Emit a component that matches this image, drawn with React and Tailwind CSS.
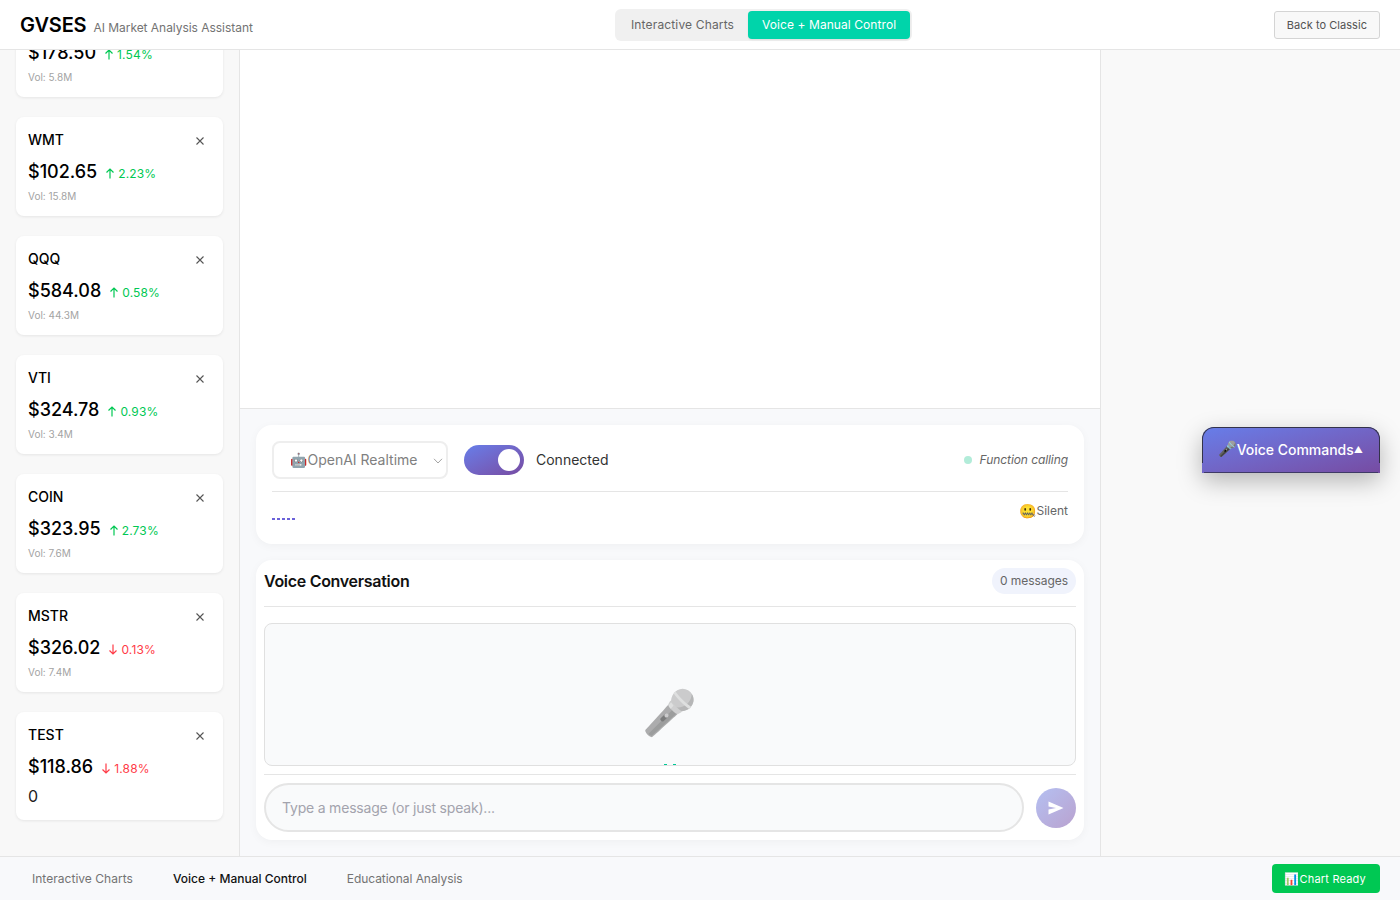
import React from "react";

const F = "font-['Inter','Liberation_Sans',sans-serif]";

const stocks = [
  ["", "$178.50", "1.54%", true, "Vol: 5.8M"],
  ["WMT", "$102.65", "2.23%", true, "Vol: 15.8M"],
  ["QQQ", "$584.08", "0.58%", true, "Vol: 44.3M"],
  ["VTI", "$324.78", "0.93%", true, "Vol: 3.4M"],
  ["COIN", "$323.95", "2.73%", true, "Vol: 7.6M"],
  ["MSTR", "$326.02", "0.13%", false, "Vol: 7.4M"],
  ["TEST", "$118.86", "1.88%", false, null],
];

function Arrow({ up }) {
  return (
    <svg width="10" height="11" viewBox="0 0 10 11" fill="none" stroke="currentColor" strokeWidth="1.2" className="shrink-0">
      {up ? <path d="M5 10.5V1M1.5 4.5 5 1l3.5 3.5" /> : <path d="M5 .5V10M1.5 6.5 5 10l3.5-3.5" />}
    </svg>
  );
}

function Card({ s }) {
  const [sym, price, pct, up, vol] = s;
  return (
    <div className={`bg-white rounded-lg px-3 pt-3 shadow-[0_1px_3px_rgba(0,0,0,0.08)] ${vol ? "h-[99px]" : "h-[108px]"}`}>
      <div className="flex items-center justify-between h-[22px]">
        <span className="text-sm leading-[22px] font-medium text-black">{sym}</span>
        <svg width="8" height="8" viewBox="0 0 8 8" stroke="#555" strokeWidth="1.1" className="mr-[7px] mt-[2px]"><path d="M.5.5l7 7M7.5.5l-7 7" /></svg>
      </div>
      <div className="flex items-center gap-2 mt-[9px] h-6">
        <span className="text-lg leading-6 font-medium text-black">{price}</span>
        <span className={`flex items-center gap-[3px] text-xs tracking-[0.15px] mt-[3px] ${up ? "text-[#00c853]" : "text-[#ff3b47]"}`}>
          <Arrow up={up} />{pct}
        </span>
      </div>
      {vol ? (
        <div className="text-[10px] leading-3 text-[#a3a3a3] mt-[6px]">{vol}</div>
      ) : (
        <div className="text-base leading-5 text-[#222] mt-[7px]">0</div>
      )}
    </div>
  );
}

function Emoji({ c, className }) {
  return <span className={`font-['Noto_Color_Emoji','Apple_Color_Emoji','Segoe_UI_Emoji',sans-serif] ${className || ""}`}>{c}</span>;
}

export default function App() {
  return (
    <div className={`${F} h-[900px] w-[1400px] overflow-hidden flex flex-col bg-[#f8f9fb]`}>
      <header className="relative z-10 h-[50px] shrink-0 bg-white border-b border-[#e5e5e5] flex items-center pl-5 pr-5">
        <div className="flex items-baseline gap-[7px] w-[595px]">
          <span className="text-xl leading-7 font-semibold text-black tracking-[-0.15px]">GVSES</span>
          <span className="text-xs text-[#737373] tracking-[-0.04px]">AI Market Analysis Assistant</span>
        </div>
        <div className="flex items-center bg-[#f0f0f0] rounded-md p-[2px] h-8">
          <div className="px-[14px] h-7 flex items-center text-xs text-[#666] tracking-[0.15px]">Interactive Charts</div>
          <div className="px-[14px] h-7 flex items-center rounded bg-[#00d4aa] text-xs text-white tracking-[0.07px] shadow-[0_1px_2px_rgba(0,0,0,0.08)]">Voice + Manual Control</div>
        </div>
        <div className="ml-auto">
          <button className="h-7 px-3 rounded-[3px] border border-[#d4d4d4] bg-[#f8f8f8] text-[11px] text-[#525252] tracking-[0.05px] pt-[1px]">Back to Classic</button>
        </div>
      </header>

      <main className="flex-1 min-h-0 flex">
        <aside className="w-[240px] shrink-0 bg-[#f8f8f8] border-r border-[#e5e5e5] overflow-hidden px-4">
          <div className="flex flex-col gap-5 -mt-[52px]">
            {stocks.map((s) => <Card key={s[1]} s={s} />)}
          </div>
        </aside>

        <section className="w-[861px] shrink-0 border-r border-[#e5e5e5] flex flex-col">
          <div className="h-[359px] shrink-0 bg-white border-b border-[#e5e5e5]" />
          <div className="flex-1 min-h-0 px-4 pt-4 flex flex-col gap-4">
            <div className="h-[119px] bg-white rounded-2xl px-4 shadow-[0_2px_10px_rgba(0,0,0,0.04)]">
              <div className="h-[67px] border-b border-[#e5e5e5] flex items-center pt-[3px]">
                <div className="relative w-[176px] h-[38px] rounded-lg border-2 border-[#eeeeee] flex items-center pl-[16px]">
                  <Emoji c="🤖" className="text-sm" />
                  <span className="text-sm text-[#808080]">OpenAI Realtime</span>
                  <svg width="10" height="6" viewBox="0 0 10 6" fill="none" stroke="#a3a3a3" className="absolute right-[3px] top-[15px]"><path d="M1 .8 5 5l4-4.2" /></svg>
                </div>
                <div className="ml-4 w-[60px] h-[30px] rounded-full bg-linear-to-br from-[#667eea] to-[#764ba2] relative">
                  <div className="absolute right-[4px] top-[4px] w-[22px] h-[22px] rounded-full bg-white" />
                </div>
                <span className="ml-3 text-sm text-[#333]">Connected</span>
                <div className="ml-auto flex items-center gap-2">
                  <span className="w-2 h-2 rounded-full bg-[#b2ecd9]" />
                  <span className="text-xs italic text-[#666] tracking-[-0.08px]">Function calling</span>
                </div>
              </div>
              <div className="flex justify-between items-start pt-[9px]">
                <div className="flex gap-[2px] mt-[17px]">
                  {[0, 1, 2, 3, 4].map((i) => <span key={i} className="w-[3px] h-[2px] bg-[#6b62d9]" />)}
                </div>
                <div className="flex items-center text-xs text-[#666] leading-4"><Emoji c="🤐" className="text-sm" /><span>Silent</span></div>
              </div>
            </div>

            <div className="h-[280px] bg-white rounded-2xl px-2 shadow-[0_2px_10px_rgba(0,0,0,0.04)] flex flex-col">
              <div className="h-[47px] shrink-0 border-b border-[#e5e5e5] flex items-center justify-between pb-[4px]">
                <span className="text-base font-semibold text-[#111] tracking-[-0.3px]">Voice Conversation</span>
                <span className="h-[26px] px-2 rounded-full bg-[#f0f3fc] flex items-center text-xs text-[#666] tracking-[-0.05px]">0 messages</span>
              </div>
              <div className="mt-4 h-[143px] shrink-0 rounded-lg border border-[#e0e0e0] bg-[#f9fafb] overflow-hidden relative flex justify-center pt-[59px]">
                <Emoji c="🎤" className="text-[44px] leading-[60px] grayscale opacity-50" />
                <div className="absolute left-[399px] bottom-0 flex gap-[6px]">
                  <span className="w-[3px] h-[1px] bg-[#00c896]" /><span className="w-[3px] h-[1px] bg-[#00c896]" />
                </div>
              </div>
              <div className="mt-2 flex-1 border-t border-[#e5e5e5] flex items-start gap-3 pt-2">
                <div className="w-[760px] h-[49px] rounded-full border-2 border-[#e5e5e5] bg-[#f9fafb] flex items-center px-4 text-sm text-[#a3a3ad] tracking-[-0.2px]">Type a message (or just speak)...</div>
                <div className="w-10 h-10 mt-[5px] rounded-full bg-linear-to-br from-[#b4c0f2] to-[#b9a2cf] flex items-center justify-center">
                  <svg width="16" height="14" viewBox="0 0 16 14" fill="white"><path d="M.5.5 15.5 7 .5 13.5V8.5L8 7 .5 5.5z" /></svg>
                </div>
              </div>
            </div>
          </div>
        </section>

        <aside className="flex-1 bg-[#f9f9f9] relative">
          <div className="absolute left-[101px] top-[377px] w-[178px] h-[46px] rounded-t-[12px] bg-linear-to-br from-[#667eea] to-[#764ba2] flex items-center pl-4 text-sm font-medium text-white shadow-[0_8px_25px_rgba(0,0,0,0.28)]">
            <div className="absolute inset-x-0 top-0 h-[36px] rounded-t-[12px] border border-b-0 border-[#33334a]" />
            <div className="absolute left-[2px] right-[2px] bottom-0 h-px bg-[#3f3a66]" />
            <Emoji c="🎤" className="text-[15px]" /><span className="tracking-[-0.02px]">Voice Commands</span><span className="text-[9px]">▲</span>
          </div>
        </aside>
      </main>

      <footer className="h-[44px] shrink-0 border-t border-[#e5e5e5] bg-[#f8f9fb] flex items-center pl-8 pr-5">
        <span className="text-xs text-[#737373] tracking-[0.03px]">Interactive Charts</span>
        <span className="ml-10 text-xs font-medium text-[#111]">Voice + Manual Control</span>
        <span className="ml-10 text-xs text-[#737373] tracking-[-0.05px]">Educational Analysis</span>
        <div className="ml-auto h-[29px] pl-[12px] pr-[14px] pt-[1px] rounded bg-[#00c853] flex items-center text-[11px] text-white tracking-[0.2px]"><Emoji c="📊" className="text-xs" />Chart Ready</div>
      </footer>
    </div>
  );
}
